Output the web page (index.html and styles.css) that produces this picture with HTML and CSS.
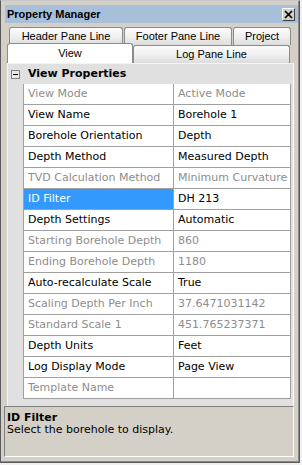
FILE: index.html
```html
<!DOCTYPE html>
<html lang="en">
<head>
  <meta charset="UTF-8">
  <title>Property Manager</title>
  <link rel="stylesheet" href="styles.css">
</head>
<body>

<div class="window">
  <div class="titlebar">
    <span class="title">Property Manager</span>
    <span class="close">
      <svg width="9" height="9" viewBox="0 0 9 9"><path d="M1 1L8 8M8 1L1 8" stroke="#000" stroke-width="1.7"/></svg>
    </span>
  </div>

  <!-- tab strip, two rows -->
  <div class="tabs">
    <div class="tab-row back">
      <div class="tab tab-header">Header Pane Line</div>
      <div class="tab tab-footer">Footer Pane Line</div>
      <div class="tab tab-project">Project</div>
    </div>
    <div class="tab-row front">
      <div class="tab tab-view active">View</div>
      <div class="tab tab-log">Log Pane Line</div>
    </div>
  </div>

  <!-- property grid -->
  <div class="page">
    <div class="grid">
      <div class="cat">
        <span class="margin"><span class="toggle"></span></span>
        <span class="cat-name">View Properties</span>
      </div>
      <div class="row ro"><span class="margin"></span><span class="name">View Mode</span><span class="value">Active Mode</span></div>
      <div class="row"><span class="margin"></span><span class="name">View Name</span><span class="value">Borehole 1</span></div>
      <div class="row"><span class="margin"></span><span class="name">Borehole Orientation</span><span class="value">Depth</span></div>
      <div class="row"><span class="margin"></span><span class="name">Depth Method</span><span class="value">Measured Depth</span></div>
      <div class="row ro"><span class="margin"></span><span class="name">TVD Calculation Method</span><span class="value">Minimum Curvature</span></div>
      <div class="row selected"><span class="margin"></span><span class="name">ID Filter</span><span class="value">DH 213</span></div>
      <div class="row"><span class="margin"></span><span class="name">Depth Settings</span><span class="value">Automatic</span></div>
      <div class="row ro"><span class="margin"></span><span class="name">Starting Borehole Depth</span><span class="value">860</span></div>
      <div class="row ro"><span class="margin"></span><span class="name">Ending Borehole Depth</span><span class="value">1180</span></div>
      <div class="row"><span class="margin"></span><span class="name">Auto-recalculate Scale</span><span class="value">True</span></div>
      <div class="row ro"><span class="margin"></span><span class="name">Scaling Depth Per Inch</span><span class="value">37.6471031142</span></div>
      <div class="row ro"><span class="margin"></span><span class="name">Standard Scale 1</span><span class="value">451.765237371</span></div>
      <div class="row"><span class="margin"></span><span class="name">Depth Units</span><span class="value">Feet</span></div>
      <div class="row"><span class="margin"></span><span class="name">Log Display Mode</span><span class="value">Page View</span></div>
      <div class="row ro"><span class="margin"></span><span class="name">Template Name</span><span class="value"></span></div>
    </div>
  </div>

  <!-- description pane -->
  <div class="help">
    <div class="help-title">ID Filter</div>
    <div class="help-text">Select the borehole to display.</div>
  </div>
</div>

</body>
</html>
```

FILE: styles.css
```css
body {
  margin: 0;
  background: #f0f0f0;
  font-family: "DejaVu Sans", sans-serif;
  font-size: 11px;
  color: #000;
}
.window {
  width: 300px;
  height: 463px;
  box-sizing: border-box;
  border: 1px solid #5a5a5a;
  border-top-color: #c8c8c8;
  background: #d4d0c8;
  padding-top: 4px;
  box-shadow: inset -1px -1px #8a8a8a;
}
.titlebar {
  height: 18px;
  margin: 0 1px 0 4px;
  padding: 0 3px 0 2px;
  background: #a8bfda;
  display: flex;
  align-items: center;
  justify-content: space-between;
}
.title {
  font-family: "Liberation Sans", Arial, sans-serif;
  font-weight: bold;
  font-size: 11px;
}
.close {
  width: 13px;
  height: 13px;
  box-sizing: border-box;
  border: 1px solid #404040;
  border-top-color: #fff;
  border-left-color: #fff;
  background: #d4d0c8;
  display: flex;
  align-items: center;
  justify-content: center;
}
.close svg {
  display: block;
}
.tabs {
  margin-top: 4px;
  font-family: "Liberation Sans", Arial, sans-serif;
  font-size: 11px;
}
.tab-row {
  display: flex;
  height: 18px;
}
.tab-row.back {
  margin-left: 8px;
}
.tab-row.front {
  margin-left: 6px;
}
.tab {
  box-sizing: border-box;
  height: 18px;
  line-height: 17px;
  text-align: center;
  border: 1px solid #8c8c8c;
  border-bottom: none;
  border-radius: 3px 3px 0 0;
  background: linear-gradient(#fcfcfc, #f0f0f0 50%, #dcdcdc);
  margin-right: 1px;
}
.tab-header { width: 114px; }
.tab-footer { width: 108px; }
.tab-project { width: 58px; }
.tab-view { width: 126px; }
.tab-log { width: 157px; }
.tab.active {
  position: relative;
  z-index: 1;
  height: 20px;
  line-height: 19px;
  margin-top: -2px;
  margin-right: 0;
  background: #fff;
}
.page {
  height: 343px;
  box-sizing: border-box;
  margin-left: 6px;
  width: 287px;
  border-top: 1px solid #f4f4f4;
  border-left: 1px solid #f4f4f4;
  border-right: 1px solid #fff;
  background: #e0e0e0;
}
.grid {
  width: 283px;
}
.cat {
  display: flex;
  height: 20px;
  line-height: 20px;
  background: #e0e0e0;
}
.margin {
  width: 15px;
  flex: none;
  background: #e0e0e0;
  display: flex;
  align-items: center;
  justify-content: center;
}
.toggle {
  width: 9px;
  height: 9px;
  box-sizing: border-box;
  border: 1px solid #808080;
  background: #e8e8e8;
  display: flex;
  align-items: center;
  justify-content: center;
}
.toggle::after {
  content: "";
  width: 5px;
  height: 1px;
  background: #000;
}
.cat-name {
  padding-left: 5px;
  font-weight: bold;
}
.row {
  display: flex;
  height: 21px;
  line-height: 20px;
}
.name,
.value {
  box-sizing: border-box;
  background: #fff;
  border-left: 1px solid #a0a0a0;
  border-bottom: 1px solid #a0a0a0;
  padding-left: 4px;
  white-space: nowrap;
  overflow: hidden;
}
.name {
  width: 150px;
}
.value {
  width: 118px;
  border-right: 1px solid #a0a0a0;
}
.ro .name,
.ro .value {
  color: #8d8d8d;
}
.selected .name {
  background: #3399ff;
  color: #fff;
}
.help {
  height: 51px;
  box-sizing: border-box;
  margin-left: 3px;
  width: 290px;
  border-top: 1px solid #808080;
  border-left: 1px solid #808080;
  border-right: 1px solid #fff;
  border-bottom: 1px solid #fff;
  padding: 5px 0 0 2px;
  line-height: 12px;
}
.help-title {
  font-weight: bold;
}
```
